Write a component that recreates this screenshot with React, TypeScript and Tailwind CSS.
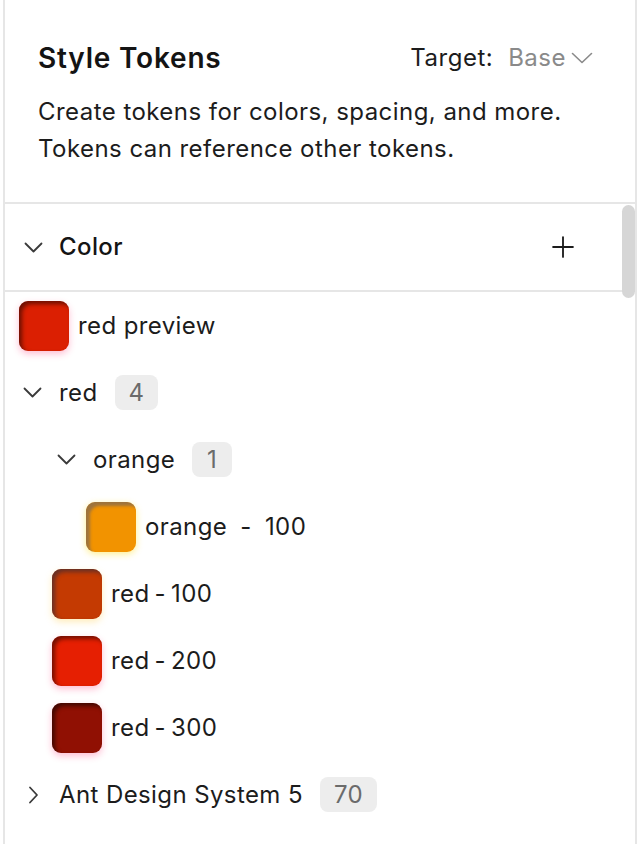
import { Plus } from 'lucide-react';

const swatches = {
  redPreview: 'bg-[#db1f02] shadow-[inset_3px_3px_4px_rgba(0,0,0,0.5),0_3px_7px_rgba(255,40,110,0.3)]',
  orange: 'bg-[#f29300] shadow-[inset_4px_4px_3px_rgba(90,90,110,0.55),0_2px_7px_rgba(255,220,0,0.45)]',
  red100: 'bg-[#c43a02] shadow-[inset_3px_3px_4px_rgba(40,40,60,0.6),0_3px_7px_rgba(255,200,60,0.35)]',
  red200: 'bg-[#e61f02] shadow-[inset_3px_3px_4px_rgba(0,0,0,0.5),0_3px_7px_rgba(255,40,110,0.3)]',
  red300: 'bg-[#901003] shadow-[inset_3px_3px_4px_rgba(0,0,0,0.55),0_3px_7px_rgba(255,40,110,0.3)]',
};

// thin "v" / ">" chevron, sized like the panel's disclosure arrows
function Chevron({ dir = 'down', className = '' }: { dir?: 'down' | 'right'; className?: string }) {
  if (dir === 'right') {
    return (
      <svg width="11" height="18" viewBox="0 0 11 18" fill="none" className={className}>
        <polyline points="2,1.5 9,9 2,16.5" stroke="currentColor" strokeWidth="1.8" strokeLinecap="round" strokeLinejoin="round" />
      </svg>
    );
  }
  return (
    <svg width="19" height="11" viewBox="0 0 19 11" fill="none" className={className}>
      <polyline points="1.5,1.5 9.5,9.5 17.5,1.5" stroke="currentColor" strokeWidth="1.8" strokeLinecap="round" strokeLinejoin="round" />
    </svg>
  );
}

function Badge({ children }: { children: React.ReactNode }) {
  return (
    <span className="ml-[17px] h-[35px] min-w-[40px] px-[14px] rounded-[8px] bg-[#ededed] text-[#6b6b6b] text-[24px] tracking-[0.4px] flex items-center justify-center">
      {children}
    </span>
  );
}

function TokenRow({ indent, swatch, children }: { indent: string; swatch: string; children: React.ReactNode }) {
  return (
    <div className={`h-[67px] flex items-center ${indent}`}>
      <div className={`w-[50px] h-[50px] rounded-[9px] ${swatch}`} />
      <span className="ml-[9px] text-[24px] tracking-[0.4px] text-[#1c1c1c]">{children}</span>
    </div>
  );
}

function GroupRow({ indent, open, label, count }: { indent: string; open: boolean; label: string; count: string }) {
  return (
    <div className={`h-[67px] flex items-center ${indent}`}>
      <span className="w-[36px] flex items-center text-[#3a3a3a]">
        {open ? <Chevron /> : <Chevron dir="right" className="ml-[5px]" />}
      </span>
      <span className="text-[24px] tracking-[0.4px] text-[#1c1c1c]">{label}</span>
      <Badge>{count}</Badge>
    </div>
  );
}

export default function App() {
  return (
    <div className="w-[640px] h-[844px] bg-white px-[3px] overflow-hidden font-['Inter','Liberation_Sans',sans-serif]">
      <div className="relative h-full border-x-2 border-[#e6e6e6]">
        {/* Header */}
        <div className="pt-[40px] pl-[33px] pr-[42px] pb-[35px]">
          <div className="h-[36px] flex items-center justify-between">
            <h1 className="text-[28px] font-semibold text-[#141414] tracking-[0.8px]">Style Tokens</h1>
            <div className="flex items-center text-[24px] tracking-[0.5px]">
              <span className="text-[#1c1c1c]">Target:</span>
              <span className="ml-[15px] text-[#8a8a8a]">Base</span>
              <svg width="22" height="12" viewBox="0 0 22 12" fill="none" className="ml-[5px] text-[#8a8a8a]">
                <polyline points="1.5,1.5 11,10.5 20.5,1.5" stroke="currentColor" strokeWidth="1.6" strokeLinecap="round" strokeLinejoin="round" />
              </svg>
            </div>
          </div>
          <p className="mt-[17px] text-[24px] leading-[37px] tracking-[0.45px] text-[#1c1c1c]">
            Create tokens for colors, spacing, and more.
            <br />
            Tokens can reference other tokens.
          </p>
        </div>

        {/* Color section */}
        <div className="h-[2px] bg-[#e6e6e6]" />
        <div className="h-[86px] flex items-center pl-[19px] pr-[55px]">
          <span className="w-[35px] text-[#3a3a3a]">
            <Chevron />
          </span>
          <span className="text-[24px] font-medium tracking-[0.4px] text-[#141414]">Color</span>
          <Plus size={34} strokeWidth={1.3} className="ml-auto text-[#1c1c1c]" />
        </div>
        <div className="h-[2px] bg-[#e6e6e6]" />

        {/* Tree */}
        <div className="flex flex-col">
          <TokenRow indent="pl-[14px]" swatch={swatches.redPreview}>red preview</TokenRow>
          <GroupRow indent="pl-[18px]" open label="red" count="4" />
          <GroupRow indent="pl-[52px]" open label="orange" count="1" />
          <TokenRow indent="pl-[81px]" swatch={swatches.orange}>
            <span className="[word-spacing:6px]">orange - 100</span>
          </TokenRow>
          <TokenRow indent="pl-[47px]" swatch={swatches.red100}>
            red<span className="mx-[5px]">-</span>100
          </TokenRow>
          <TokenRow indent="pl-[47px]" swatch={swatches.red200}>
            red<span className="mx-[5px]">-</span>200
          </TokenRow>
          <TokenRow indent="pl-[47px]" swatch={swatches.red300}>
            red<span className="mx-[5px]">-</span>300
          </TokenRow>
          <GroupRow indent="pl-[18px]" open={false} label="Ant Design System 5" count="70" />
        </div>

        {/* Scrollbar thumb */}
        <div className="absolute left-[617px] top-[205px] w-[13px] h-[93px] rounded-full bg-[#d6d6d6]" />
      </div>
    </div>
  );
}
